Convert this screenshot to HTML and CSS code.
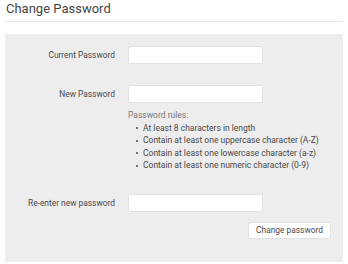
FILE: index.html
```html
<!DOCTYPE html>
<html lang="en">
  <head>
    <meta charset="UTF-8" />
    <meta name="viewport" content="width=device-width, initial-scale=1.0" />
    <link rel="stylesheet" href="styles.css">
    <title>Change Password</title>
  </head>
  <body>
    <div class="page">
      <h1 class="title">Change Password</h1>
      <form class="panel">
        <div class="field">
          <label for="current">Current Password</label>
          <input type="password" id="current" />
        </div>
        <div class="field field-new">
          <label for="new">New Password</label>
          <input type="password" id="new" />
          <div class="rules">
            <p>Password rules:</p>
            <ul>
              <li>At least 8 characters in length</li>
              <li>Contain at least one uppercase character (A-Z)</li>
              <li>Contain at least one lowercase character (a-z)</li>
              <li>Contain at least one numeric character (0-9)</li>
            </ul>
          </div>
        </div>
        <div class="field field-confirm">
          <label for="confirm">Re-enter new password</label>
          <input type="password" id="confirm" />
          <div class="actions">
            <button type="button">Change password</button>
          </div>
        </div>
      </form>
    </div>
  </body>
</html>
```

FILE: styles.css
```css
* {
  margin: 0;
  padding: 0;
  box-sizing: border-box;
}
body {
  font-family: Roboto, "Liberation Sans", sans-serif;
  color: #4a4a4a;
  background: #fff;
}
.page {
  padding: 0 5px;
}
.title {
  font-size: 13px;
  font-weight: 400;
  line-height: 16px;
  padding: 1px 1px 4px;
  color: #444;
  border-bottom: 1px solid #e6e6e6;
}
.panel {
  margin-top: 12px;
  background: #ededed;
  padding: 12px 12px 23px 11px;
}
.field {
  display: grid;
  grid-template-columns: 99px 135px 1fr;
  column-gap: 13px;
  align-items: center;
}
.field-new {
  margin-top: 21px;
}
.field-confirm {
  margin-top: 22px;
}
label {
  grid-column: 1;
  text-align: right;
  font-size: 8.4px;
  color: #4a4a4a;
}
input {
  grid-column: 2;
  height: 18px;
  border: 1px solid #e2e2e2;
  border-radius: 2px;
  background: #fff;
}
.rules {
  grid-column: 2 / 4;
  margin-top: 6px;
  font-size: 8.5px;
  line-height: 12.5px;
}
.rules p {
  color: #7a7a7a;
}
.rules ul {
  list-style: none;
}
.rules li::before {
  content: "";
  display: inline-block;
  width: 2px;
  height: 2px;
  border-radius: 50%;
  background: currentColor;
  margin: 0 5px 0 8px;
  vertical-align: middle;
}
.actions {
  grid-column: 2 / 4;
  display: flex;
  justify-content: flex-end;
  margin-top: 10px;
}
button {
  height: 17px;
  padding: 0 7px;
  font-family: inherit;
  font-size: 8.4px;
  color: #4a4a4a;
  background: #fff;
  border: 1px solid #e2e2e2;
  border-radius: 2px;
}
```
